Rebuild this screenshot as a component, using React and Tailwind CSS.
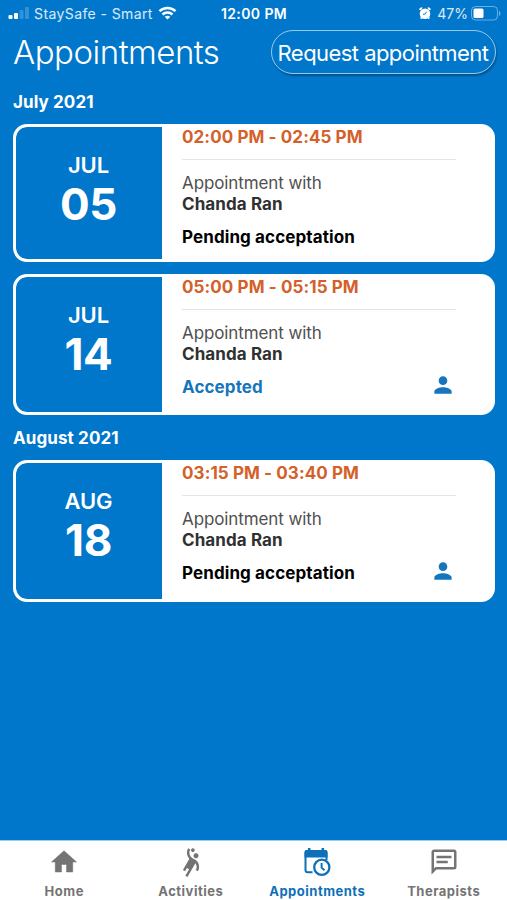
import { MdPerson, MdSportsHandball } from "react-icons/md";

function SignalIcon() {
  return (
    <svg className="h-4 w-[22px]" viewBox="0 0 22 16" fill="#fff">
      <rect x="0.5" y="10" width="4" height="4" rx="1" />
      <rect x="6" y="8" width="4" height="6" rx="1" />
      <rect x="11.5" y="5" width="4" height="9" rx="1" opacity="0.2" />
      <rect x="17" y="2" width="4" height="12" rx="1" opacity="0.2" />
    </svg>
  );
}

function WifiIcon() {
  return (
    <svg className="h-[14px] w-[19px]" viewBox="0 0 18 14" fill="none" stroke="#fff" strokeWidth="2.5">
      <path d="M1 5.2C5.4.8 12.6.8 17 5.2" />
      <path d="M4 8.5C6.8 5.8 11.2 5.8 14 8.5" />
      <path d="M6.2 10.7C7.9 9.3 10.1 9.3 11.8 10.7L9 13.5Z" fill="#fff" stroke="none" />
    </svg>
  );
}

function AlarmIcon() {
  return (
    <svg className="h-[13px] w-3" viewBox="0 0 12 13">
      <circle cx="6" cy="6.8" r="5.3" fill="#fff" />
      <path d="M1 3A2 2 0 0 1 3.2 1.3M8.8 1.3A2 2 0 0 1 11 3M2.6 10.6L1.8 11.6M9.4 10.6L10.2 11.6" stroke="#fff" strokeWidth="2" fill="none" />
      <path d="M7.6 4.6L6 7.2H4" stroke="#0077cb" strokeWidth="0.9" fill="none" />
    </svg>
  );
}

function BatteryIcon() {
  return (
    <svg className="h-[15px] w-[30px]" viewBox="0 0 30 15">
      <rect x="0.5" y="0.5" width="26" height="13.5" rx="4" fill="none" stroke="#fff" strokeOpacity="0.42" />
      <rect x="2.5" y="2.5" width="10" height="9.5" rx="1.5" fill="#fff" />
      <path d="M28 5v5c1-.5 1.5-1.4 1.5-2.5S29 5.5 28 5z" fill="#fff" opacity="0.42" />
    </svg>
  );
}

function HomeIcon() {
  return (
    <svg className="h-[30px] w-[30px]" viewBox="0 0 24 24" fill="currentColor" stroke="currentColor" strokeWidth="0.4">
      <path d="M10 20v-6h4v6h5v-8h3L12 3 2 12h3v8z" />
    </svg>
  );
}

function CalendarClockIcon() {
  return (
    <svg className="h-[30px] w-[30px]" viewBox="0 0 30 30" fill="none" stroke="currentColor">
      <path d="M10.5 25.3H5.8A2.3 2.3 0 0 1 3.5 23V6.2A2.3 2.3 0 0 1 5.8 3.9H22.2A2.3 2.3 0 0 1 24.5 6.2V13" strokeWidth="2" />
      <path d="M2.5 5A2 2 0 0 1 4.5 3H23.5A2 2 0 0 1 25.5 5V10.5H2.5Z" fill="currentColor" stroke="none" />
      <path d="M7.2 1V5M20.8 1V5" strokeWidth="2.5" />
      <circle cx="19.8" cy="20.2" r="7.6" strokeWidth="2.3" fill="#fff" />
      <path d="M19.6 16V20.6L22.5 23.2" strokeWidth="1.9" />
    </svg>
  );
}

function MessageIcon() {
  return (
    <svg className="h-[30px] w-[30px]" viewBox="0 0 24 24" fill="currentColor">
      <path d="M20 2A2 2 0 0 1 22 4V16A2 2 0 0 1 20 18H6L2 22V4C2 2.89 2.9 2 4 2H20M4 4V17.17L5.17 16H20V4H4M6 7H18V9H6V7M6 11H15V13H6V11Z" />
    </svg>
  );
}

function AppointmentCard({ month, day, time, status, accepted, person, height }) {
  return (
    <article className={`flex shrink-0 overflow-hidden rounded-[14px] border-[3px] border-white bg-white ${height}`}>
      <div className="flex w-[146px] shrink-0 flex-col items-center rounded-l-[11px] bg-[#0077cb] pt-[24px] pr-px text-white">
        <span className="text-[22px] leading-7 font-semibold tracking-[-0.1px]">{month}</span>
        <span className="mt-px text-[44px] leading-[48px] font-[650] tracking-[-0.4px]">{day}</span>
      </div>
      <div className="flex-1 pr-9 pl-5">
        <p className="h-[33px] border-b border-[#e4e4e4] text-[17px] leading-5 font-[650] tracking-[0.1px] text-[#d4602a]">{time}</p>
        <p className="mt-[13px] text-[17px] leading-[21px] tracking-[-0.1px] text-[#505050]">Appointment with</p>
        <p className="text-[17px] leading-5 font-[650] tracking-[0.1px] text-[#303030]">Chanda Ran</p>
        <div className="mt-[13px] flex h-[22px] items-center justify-between">
          <span className={`text-[17px] font-[650] tracking-[0.1px] ${accepted ? "text-[#1676bd]" : "text-black"}`}>{status}</span>
          {person && <MdPerson className="-mt-[7px] h-[26px] w-[26px] text-[#1676bd]" />}
        </div>
      </div>
    </article>
  );
}

function Tab({ icon, label, active }) {
  return (
    <div className={`flex flex-1 flex-col items-center pt-[6px] ${active ? "text-[#0d70b8]" : "text-[#747474]"}`}>
      {icon}
      <span className="mt-[6px] text-[13px] leading-4 font-[650] tracking-[0.5px]">{label}</span>
    </div>
  );
}

export default function App() {
  return (
    <div className="flex h-[900px] w-[507px] flex-col overflow-hidden bg-[#0077cb] font-['Inter',sans-serif] whitespace-nowrap text-white">
      <header className="grid h-[26px] grid-cols-[1fr_auto_1fr] items-center pr-[6px] pl-2 text-[14px]">
        <div className="flex items-center">
          <SignalIcon />
          <span className="ml-1 tracking-[0.4px] text-white/85">StaySafe - Smart</span>
          <span className="ml-[5px]"><WifiIcon /></span>
        </div>
        <span className="-ml-px font-semibold tracking-[0.4px]">12:00 PM</span>
        <div className="flex items-center justify-end">
          <AlarmIcon />
          <span className="mr-[3px] ml-[6px] text-white/85">47%</span>
          <BatteryIcon />
        </div>
      </header>
      <div className="mt-[2px] flex h-[50px] items-start justify-between pr-[11px] pl-[13px]">
        <h1 className="pt-1 text-[33px] leading-10 font-[350] tracking-[-0.5px]">Appointments</h1>
        <button className="mt-[2px] flex h-[44px] w-[225px] items-center justify-center rounded-full border border-white/60 pt-[2px] pr-px text-[22px] tracking-[-0.55px] shadow-[1px_2px_2px_rgba(0,0,0,0.3)]">
          Request appointment
        </button>
      </div>
      <main className="flex flex-1 flex-col pr-3 pl-[13px]">
        <h2 className="mt-[14px] mb-[11px] text-[17px] leading-[21px] font-[650] tracking-[0.1px]">July 2021</h2>
        <AppointmentCard height="h-[138px]" month="JUL" day="05" time="02:00 PM - 02:45 PM" status="Pending acceptation" />
        <div className="h-3 shrink-0" />
        <AppointmentCard height="h-[141px]" month="JUL" day="14" time="05:00 PM - 05:15 PM" status="Accepted" accepted person />
        <h2 className="mt-[13px] mb-[11px] text-[17px] leading-[21px] font-[650] tracking-[0.1px]">August 2021</h2>
        <AppointmentCard height="h-[142px]" month="AUG" day="18" time="03:15 PM - 03:40 PM" status="Pending acceptation" person />
      </main>
      <nav className="flex h-[60px] shrink-0 border-t border-[#9bcbed] bg-white pl-px">
        <Tab icon={<HomeIcon />} label="Home" />
        <Tab icon={<MdSportsHandball className="h-[30px] w-[30px]" />} label="Activities" />
        <Tab icon={<CalendarClockIcon />} label="Appointments" active />
        <Tab icon={<MessageIcon />} label="Therapists" />
      </nav>
    </div>
  );
}
